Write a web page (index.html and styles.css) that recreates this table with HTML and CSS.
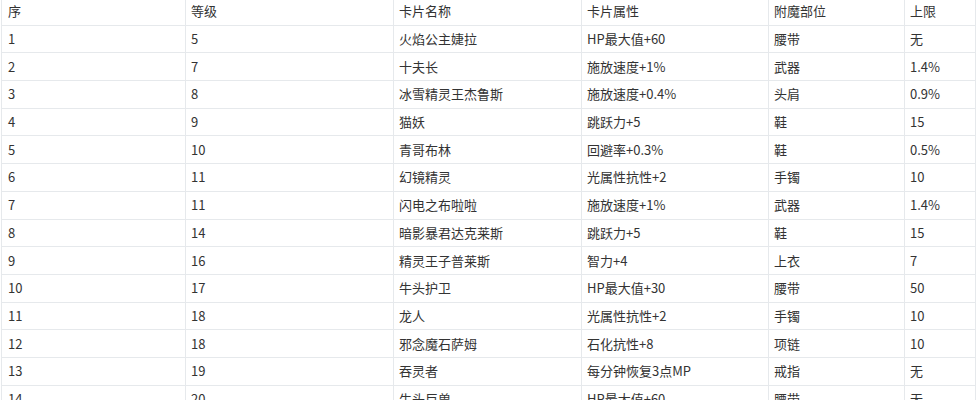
FILE: index.html
```html
<!DOCTYPE html>
<html>
<head>
<meta charset="utf-8">
<link rel="stylesheet" href="styles.css">
</head>
<body>
<table class="cards">
<colgroup>
<col class="c1"><col class="c2"><col class="c3"><col class="c4"><col class="c5"><col class="c6">
</colgroup>
<tr><td>序</td><td>等级</td><td>卡片名称</td><td>卡片属性</td><td>附魔部位</td><td>上限</td></tr>
<tr><td>1</td><td>5</td><td>火焰公主婕拉</td><td>HP最大值+60</td><td>腰带</td><td>无</td></tr>
<tr><td>2</td><td>7</td><td>十夫长</td><td>施放速度+1%</td><td>武器</td><td>1.4%</td></tr>
<tr><td>3</td><td>8</td><td>冰雪精灵王杰鲁斯</td><td>施放速度+0.4%</td><td>头肩</td><td>0.9%</td></tr>
<tr><td>4</td><td>9</td><td>猫妖</td><td>跳跃力+5</td><td>鞋</td><td>15</td></tr>
<tr><td>5</td><td>10</td><td>青哥布林</td><td>回避率+0.3%</td><td>鞋</td><td>0.5%</td></tr>
<tr><td>6</td><td>11</td><td>幻镜精灵</td><td>光属性抗性+2</td><td>手镯</td><td>10</td></tr>
<tr><td>7</td><td>11</td><td>闪电之布啦啦</td><td>施放速度+1%</td><td>武器</td><td>1.4%</td></tr>
<tr><td>8</td><td>14</td><td>暗影暴君达克莱斯</td><td>跳跃力+5</td><td>鞋</td><td>15</td></tr>
<tr><td>9</td><td>16</td><td>精灵王子普莱斯</td><td>智力+4</td><td>上衣</td><td>7</td></tr>
<tr><td>10</td><td>17</td><td>牛头护卫</td><td>HP最大值+30</td><td>腰带</td><td>50</td></tr>
<tr><td>11</td><td>18</td><td>龙人</td><td>光属性抗性+2</td><td>手镯</td><td>10</td></tr>
<tr><td>12</td><td>18</td><td>邪念魔石萨姆</td><td>石化抗性+8</td><td>项链</td><td>10</td></tr>
<tr><td>13</td><td>19</td><td>吞灵者</td><td>每分钟恢复3点MP</td><td>戒指</td><td>无</td></tr>
<tr><td>14</td><td>20</td><td>牛头巨兽</td><td>HP最大值+60</td><td>腰带</td><td>无</td></tr>
</table>
</body>
</html>
```
FILE: styles.css
```css
html, body {
  margin: 0;
  padding: 0;
  background: #ffffff;
  overflow: hidden;
}
body {
  font-family: "Noto Sans CJK SC", "Microsoft YaHei", "Liberation Sans", sans-serif;
  font-size: 13px;
  color: #333333;
}
.cards {
  border-collapse: collapse;
  table-layout: fixed;
  width: 974px;
  margin: -3px 0 0 1px;
}
.c1 { width: 184px; }
.c2 { width: 208px; }
.c3 { width: 188px; }
.c4 { width: 187px; }
.c5 { width: 136px; }
.c6 { width: 71px; }
.cards td {
  border: 1px solid #e6e9ec;
  height: 27.7px;
  padding: 0 0 0 5px;
  line-height: 16px;
  vertical-align: middle;
  white-space: nowrap;
  box-sizing: border-box;
}
.cards td:first-child {
  padding-left: 6px;
}
```
